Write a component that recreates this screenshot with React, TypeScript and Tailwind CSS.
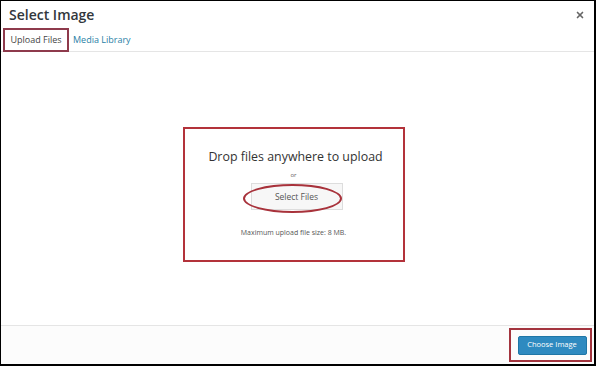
import { X } from "lucide-react";

const font = { fontFamily: '"Open Sans", "Noto Sans", sans-serif' };

export default function App() {
  return (
    <div
      className="flex h-[366px] w-[596px] flex-col border-t border-l border-r-2 border-b-2 border-black bg-white text-[#23282d]"
      style={font}
    >
      {/* Title bar */}
      <div className="flex h-[27px] items-center justify-between pl-[8px] pr-[9px]">
        <h1 className="text-[14px] font-semibold leading-none text-[#32373c]">Select Image</h1>
        <X size={10} strokeWidth={4} className="text-[#666]" />
      </div>

      {/* Tabs */}
      <div className="flex h-[24px] items-center border-b border-[#e5e5e5] pl-[2px]">
        <div className="flex h-[24px] w-[66px] items-center justify-center border-2 border-[#8e3a4c] text-[9px] text-[#444]">
          Upload Files
        </div>
        <div className="ml-[4px] text-[9px] text-[#2a7fa6]">Media Library</div>
      </div>

      {/* Upload area */}
      <div className="flex flex-1 items-center justify-center pt-[12px]">
        <div className="ml-[-8px] flex h-[135px] w-[222px] flex-col items-center border-2 border-[#b3323a] pt-[22px]">
          <p className="ml-[4px] text-[12.4px] leading-none text-[#333]">Drop files anywhere to upload</p>
          <p className="mt-[9px] text-[6px] leading-none text-[#666]">or</p>
          <div className="relative ml-[6px] mt-[5px]">
            <div className="flex h-[27px] w-[92px] items-center justify-center border border-[#ddd] bg-[#f7f7f7] text-[8.5px] text-[#555]">
              Select Files
            </div>
            <div className="absolute left-[-8px] top-[1px] h-[29px] w-[99px] rounded-[50%] border-2 border-[#a8323b]" />
          </div>
          <p className="mt-[19px] text-[7px] leading-none text-[#555]">Maximum upload file size: 8 MB.</p>
        </div>
      </div>

      {/* Footer */}
      <div className="flex h-[39px] items-center justify-end border-t border-[#e5e5e5] bg-[#fcfcfc] pr-[2px]">
        <div className="flex h-[34px] w-[83px] items-center justify-center border-2 border-[#a3343e] pl-[3px]">
          <button className="h-[19px] w-[69px] rounded-[2px] border border-[#1f76a6] bg-[#2e8ac0] text-[7.5px] text-white">
            Choose Image
          </button>
        </div>
      </div>
    </div>
  );
}
